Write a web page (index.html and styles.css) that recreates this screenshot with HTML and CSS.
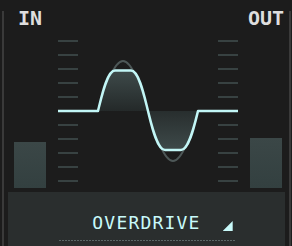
FILE: index.html
```html
<!DOCTYPE html>
<html lang="en">
<head>
<meta charset="UTF-8">
<meta name="viewport" content="width=device-width, initial-scale=1.0">
<title>Drive</title>
<link rel="stylesheet" href="styles.css">
</head>
<body>
  <div class="unit">
    <div class="rail"></div>
    <div class="panel">
      <div class="top">
        <div class="channel">
          <span class="label">IN</span>
          <div class="meter meter-in"></div>
        </div>
        <svg class="scope" width="180" height="192" viewBox="0 0 180 192">
          <defs>
            <linearGradient id="fillUp" x1="0" y1="0" x2="0" y2="1">
              <stop offset="0" stop-color="#3e4a4a"/>
              <stop offset="1" stop-color="#242929"/>
            </linearGradient>
            <linearGradient id="fillDown" x1="0" y1="0" x2="0" y2="1">
              <stop offset="0" stop-color="#282e2e"/>
              <stop offset="1" stop-color="#3e4a4a"/>
            </linearGradient>
          </defs>
          <!-- ticks -->
          <g fill="#384242">
            <rect x="0" y="40" width="20" height="2"/><rect x="160" y="40" width="20" height="2"/>
            <rect x="0" y="54" width="20" height="2"/><rect x="160" y="54" width="20" height="2"/>
            <rect x="0" y="68" width="20" height="2"/><rect x="160" y="68" width="20" height="2"/>
            <rect x="0" y="82" width="20" height="2"/><rect x="160" y="82" width="20" height="2"/>
            <rect x="0" y="96" width="20" height="2"/><rect x="160" y="96" width="20" height="2"/>
            <rect x="0" y="124" width="20" height="2"/><rect x="160" y="124" width="20" height="2"/>
            <rect x="0" y="138" width="20" height="2"/><rect x="160" y="138" width="20" height="2"/>
            <rect x="0" y="152" width="20" height="2"/><rect x="160" y="152" width="20" height="2"/>
            <rect x="0" y="166" width="20" height="2"/><rect x="160" y="166" width="20" height="2"/>
            <rect x="0" y="180" width="20" height="2"/><rect x="160" y="180" width="20" height="2"/>
          </g>
          <!-- dry signal -->
          <path d="M40,111 C48.16,85.36 56.04,61 65,61 C73.96,61 81.84,85.36 90,111 C98.16,136.64 106.04,161 115,161 C123.96,161 131.84,136.64 140,111"
                fill="none" stroke="#4d5757" stroke-width="2"/>
          <!-- clipped signal -->
          <path d="M40,111 C43.5,97 49,70.5 57,70.5 L73,70.5 C81,70.5 86.5,97 90,111 Z" fill="url(#fillUp)"/>
          <path d="M90,111 C93.5,125 99,150 107,150 L123,150 C131,150 136.5,125 140,111 Z" fill="url(#fillDown)"/>
          <path d="M0,111 L40,111 C43.5,97 49,70.5 57,70.5 L73,70.5 C81,70.5 86.5,97 90,111 C93.5,125 99,150 107,150 L123,150 C131,150 136.5,125 140,111 L180,111"
                fill="none" stroke="#c2f6f6" stroke-width="2.5" stroke-linejoin="round"/>
        </svg>
        <div class="channel">
          <span class="label">OUT</span>
          <div class="meter meter-out"></div>
        </div>
      </div>
      <div class="mode">
        <span class="mode-name">OVERDRIVE</span>
        <span class="mode-arrow"></span>
        <div class="mode-dots"></div>
      </div>
    </div>
    <div class="rail"></div>
  </div>
</body>
</html>
```

FILE: styles.css
```css
body {
  margin: 0;
  background: #1c1c1c;
  font-family: "DejaVu Sans Mono", monospace;
}
.unit {
  display: flex;
  height: 246px;
  padding-left: 2px;
  overflow: hidden;
}
.rail {
  width: 2px;
  margin-top: 11px;
  background: #3a3a3a;
}
.panel {
  width: 285px;
  display: flex;
  flex-direction: column;
}
.top {
  display: flex;
  height: 192px;
  padding-left: 10px;
  gap: 12px;
}
.channel {
  width: 32px;
  display: flex;
  flex-direction: column;
  align-items: center;
}
.label {
  margin-top: 8px;
  font-size: 20px;
  line-height: 20px;
  font-weight: bold;
  color: #dedede;
  white-space: nowrap;
}
.meter {
  width: 32px;
  margin-top: auto;
  margin-bottom: 4px;
  background: linear-gradient(#3b4747, #334040);
}
.meter-in {
  height: 46px;
}
.meter-out {
  height: 50px;
}
.scope {
  display: block;
}
.mode {
  margin: 0 4px;
  height: 54px;
  background: #2a2e2e;
  display: grid;
  grid-template-columns: 1fr auto 1fr;
  align-content: start;
}
.mode-name {
  grid-column: 2;
  margin-top: 22px;
  font-size: 18px;
  line-height: 18px;
  letter-spacing: 1.2px;
  color: #c8fafa;
}
.mode-arrow {
  grid-column: 3;
  align-self: end;
  justify-self: start;
  margin: 0 0 1px 22px;
  width: 10px;
  height: 10px;
  background: #c8fafa;
  clip-path: polygon(100% 0, 100% 100%, 0 100%);
}
.mode-dots {
  grid-column: 1 / 4;
  justify-self: center;
  width: 176px;
  height: 1px;
  margin-top: 8px;
  background: repeating-linear-gradient(90deg, #5a6666 0 2px, transparent 2px 3px);
}
```
